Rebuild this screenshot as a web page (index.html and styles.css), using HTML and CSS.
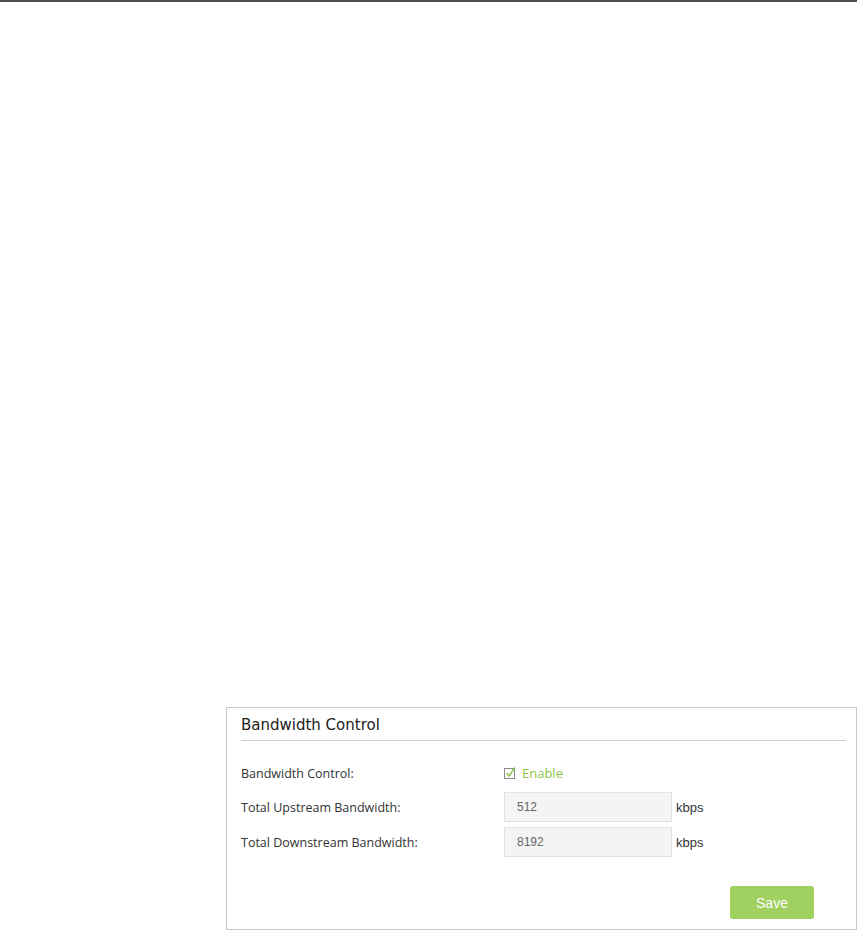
FILE: index.html
```html
<!DOCTYPE html>
<html lang="en">
<head>
    <meta charset="UTF-8">
    <title>Bandwidth Control</title>
    <link rel="stylesheet" href="styles.css">
</head>
<body>

    <div class="topbar"></div>

    <div class="page">
        <div class="panel">
            <h3 class="panel-title">Bandwidth Control</h3>

            <div class="row row-check">
                <label class="row-label">Bandwidth Control:</label>
                <label class="check">
                    <svg class="check-box" width="12" height="12" viewBox="0 0 12 12">
                        <rect x="0.5" y="1.5" width="10" height="10" fill="#fff" stroke="#8a8a8a"/>
                        <path d="M2.5 6 L5 9 L11 0.5" fill="none" stroke="#8cc63f" stroke-width="1.4"/>
                    </svg>
                    <span>Enable</span>
                </label>
            </div>

            <div class="row">
                <label class="row-label">Total Upstream Bandwidth:</label>
                <input class="field" type="text" value="512">
                <span class="unit">kbps</span>
            </div>

            <div class="row">
                <label class="row-label">Total Downstream Bandwidth:</label>
                <input class="field" type="text" value="8192">
                <span class="unit">kbps</span>
            </div>

            <div class="actions">
                <button class="btn-save">Save</button>
            </div>
        </div>
    </div>

</body>
</html>
```

FILE: styles.css
```css
* {
    margin: 0;
    padding: 0;
    box-sizing: border-box;
}

body {
    background: #fff;
    font-family: "Open Sans", "Liberation Sans", sans-serif;
    color: #333;
}

.topbar {
    height: 2px;
    background: #4d4d4d;
}

.page {
    padding: 705px 0 0 226px;
}

/* settings panel */
.panel {
    width: 631px;
    height: 223px;
    border: 1px solid #c8c8c8;
    padding: 0 10px 0 14px;
}

.panel-title {
    font-family: "DejaVu Sans", sans-serif;
    font-weight: normal;
    font-size: 15px;
    color: #222;
    padding: 8px 0 6px 0;
    border-bottom: 1px solid #cfcfcf;
    margin-bottom: 18px;
}

.row {
    display: flex;
    align-items: center;
    height: 30px;
    margin-bottom: 5px;
    font-size: 12.5px;
}

.row-check {
    height: 28px;
    margin-bottom: 5px;
}

.row-label {
    width: 263px;
    color: #333;
}

.check {
    display: flex;
    align-items: center;
    gap: 6px;
    color: #8cc63f;
    font-size: 13px;
}

.field {
    width: 168px;
    height: 30px;
    background: #f4f4f4;
    border: 1px solid #e2e2e2;
    padding-left: 12px;
    font-family: "Liberation Sans", Arial, sans-serif;
    font-size: 12px;
    color: #666;
    outline: none;
}

.unit {
    margin-left: 4px;
    font-family: "Liberation Sans", Arial, sans-serif;
    font-size: 13px;
    color: #333;
}

.actions {
    display: flex;
    justify-content: flex-end;
    padding-right: 32px;
    margin-top: 29px;
}

.btn-save {
    width: 84px;
    height: 33px;
    background: #a0d05f;
    color: #fff;
    border: none;
    border-radius: 3px;
    font-family: "Liberation Sans", Arial, sans-serif;
    font-size: 14px;
    cursor: pointer;
}
```
